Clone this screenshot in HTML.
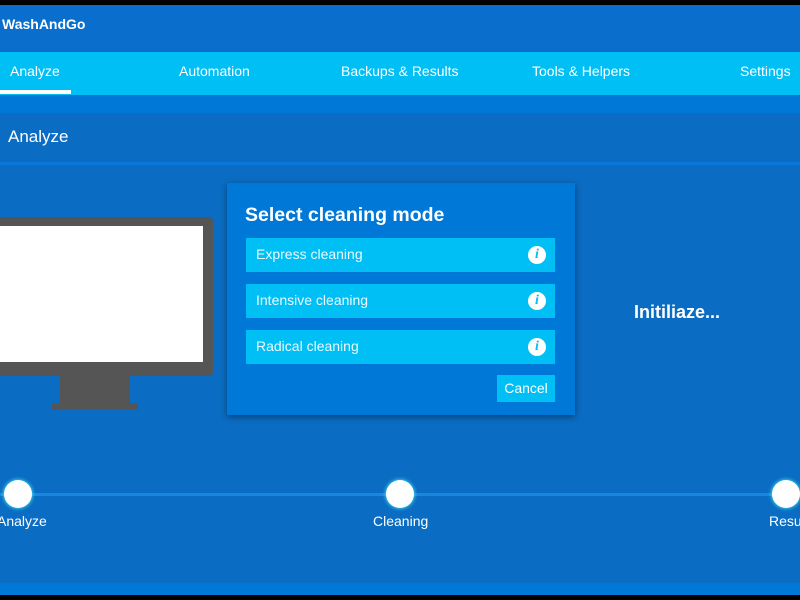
<!DOCTYPE html>
<html><head><style>
*{margin:0;padding:0;box-sizing:border-box}
body{width:800px;height:600px;overflow:hidden;background:#000;font-family:"Liberation Sans",sans-serif;color:#fff;position:relative}
div{position:absolute}
.t{font-size:14px;white-space:nowrap}
.row{left:246px;width:309px;height:34px;background:#00bff5;font-size:14px;padding:8px 0 0 10px;color:#eafaff}
.i{position:absolute;right:9px;top:8px;width:18px;height:18px;border-radius:50%;background:#fff;color:#00bff5;font:bold italic 14px "Liberation Serif",serif;text-align:center;line-height:18px}
.c{width:28px;height:28px;border-radius:50%;background:#fff;top:480px;box-shadow:0 0 4px #5ff}
</style></head><body>
<div style="left:0;top:5px;width:800px;height:47px;background:#0a6fcc"></div>
<div class="t" style="left:2px;top:16px;font-weight:bold;font-size:14px">WashAndGo</div>
<div style="left:0;top:52px;width:800px;height:43px;background:#00bff5"></div>
<div class="t" style="left:10px;top:63px">Analyze</div>
<div style="left:0;top:90px;width:71px;height:4px;background:#fff"></div>
<div class="t" style="left:179px;top:63px">Automation</div>
<div class="t" style="left:341px;top:63px">Backups &amp; Results</div>
<div class="t" style="left:532px;top:63px">Tools &amp; Helpers</div>
<div class="t" style="left:740px;top:63px">Settings</div>
<div style="left:0;top:95px;width:800px;height:18px;background:#0078d7"></div>
<div style="left:0;top:113px;width:800px;height:470px;background:#0a6cc2"></div>
<div style="left:0;top:162px;width:800px;height:3px;background:#0a78d8"></div>
<div class="t" style="left:8px;top:127px;font-size:17px">Analyze</div>
<div style="left:0;top:217px;width:213px;height:159px;background:#555;border-radius:0 4px 4px 0"></div>
<div style="left:0;top:226px;width:203px;height:136px;background:#fff"></div>
<div style="left:60px;top:376px;width:70px;height:27px;background:#555"></div>
<div style="left:52px;top:403px;width:86px;height:7px;background:#555"></div>
<div style="left:0;top:493px;width:800px;height:3px;background:#1a86e0"></div>
<div class="c" style="left:4px"></div>
<div class="c" style="left:386px"></div>
<div class="c" style="left:772px"></div>
<div class="t" style="left:-3px;top:513px">Analyze</div>
<div class="t" style="left:373px;top:513px">Cleaning</div>
<div class="t" style="left:769px;top:513px">Results</div>
<div class="t" style="left:634px;top:302px;font-weight:bold;font-size:18px">Initiliaze...</div>
<div style="left:227px;top:183px;width:348px;height:232px;background:#0078d7;box-shadow:0 2px 6px rgba(0,0,0,.4)"></div>
<div class="t" style="left:245px;top:204px;font-weight:bold;font-size:19.5px">Select cleaning mode</div>
<div class="row" style="top:238px">Express cleaning<span class="i">i</span></div>
<div class="row" style="top:284px">Intensive cleaning<span class="i">i</span></div>
<div class="row" style="top:330px">Radical cleaning<span class="i">i</span></div>
<div style="left:497px;top:375px;width:58px;height:27px;background:#00bff5;font-size:14px;text-align:center;padding-top:5px">Cancel</div>
<div style="left:0;top:583px;width:800px;height:12px;background:#0078d7"></div>
</body></html>
